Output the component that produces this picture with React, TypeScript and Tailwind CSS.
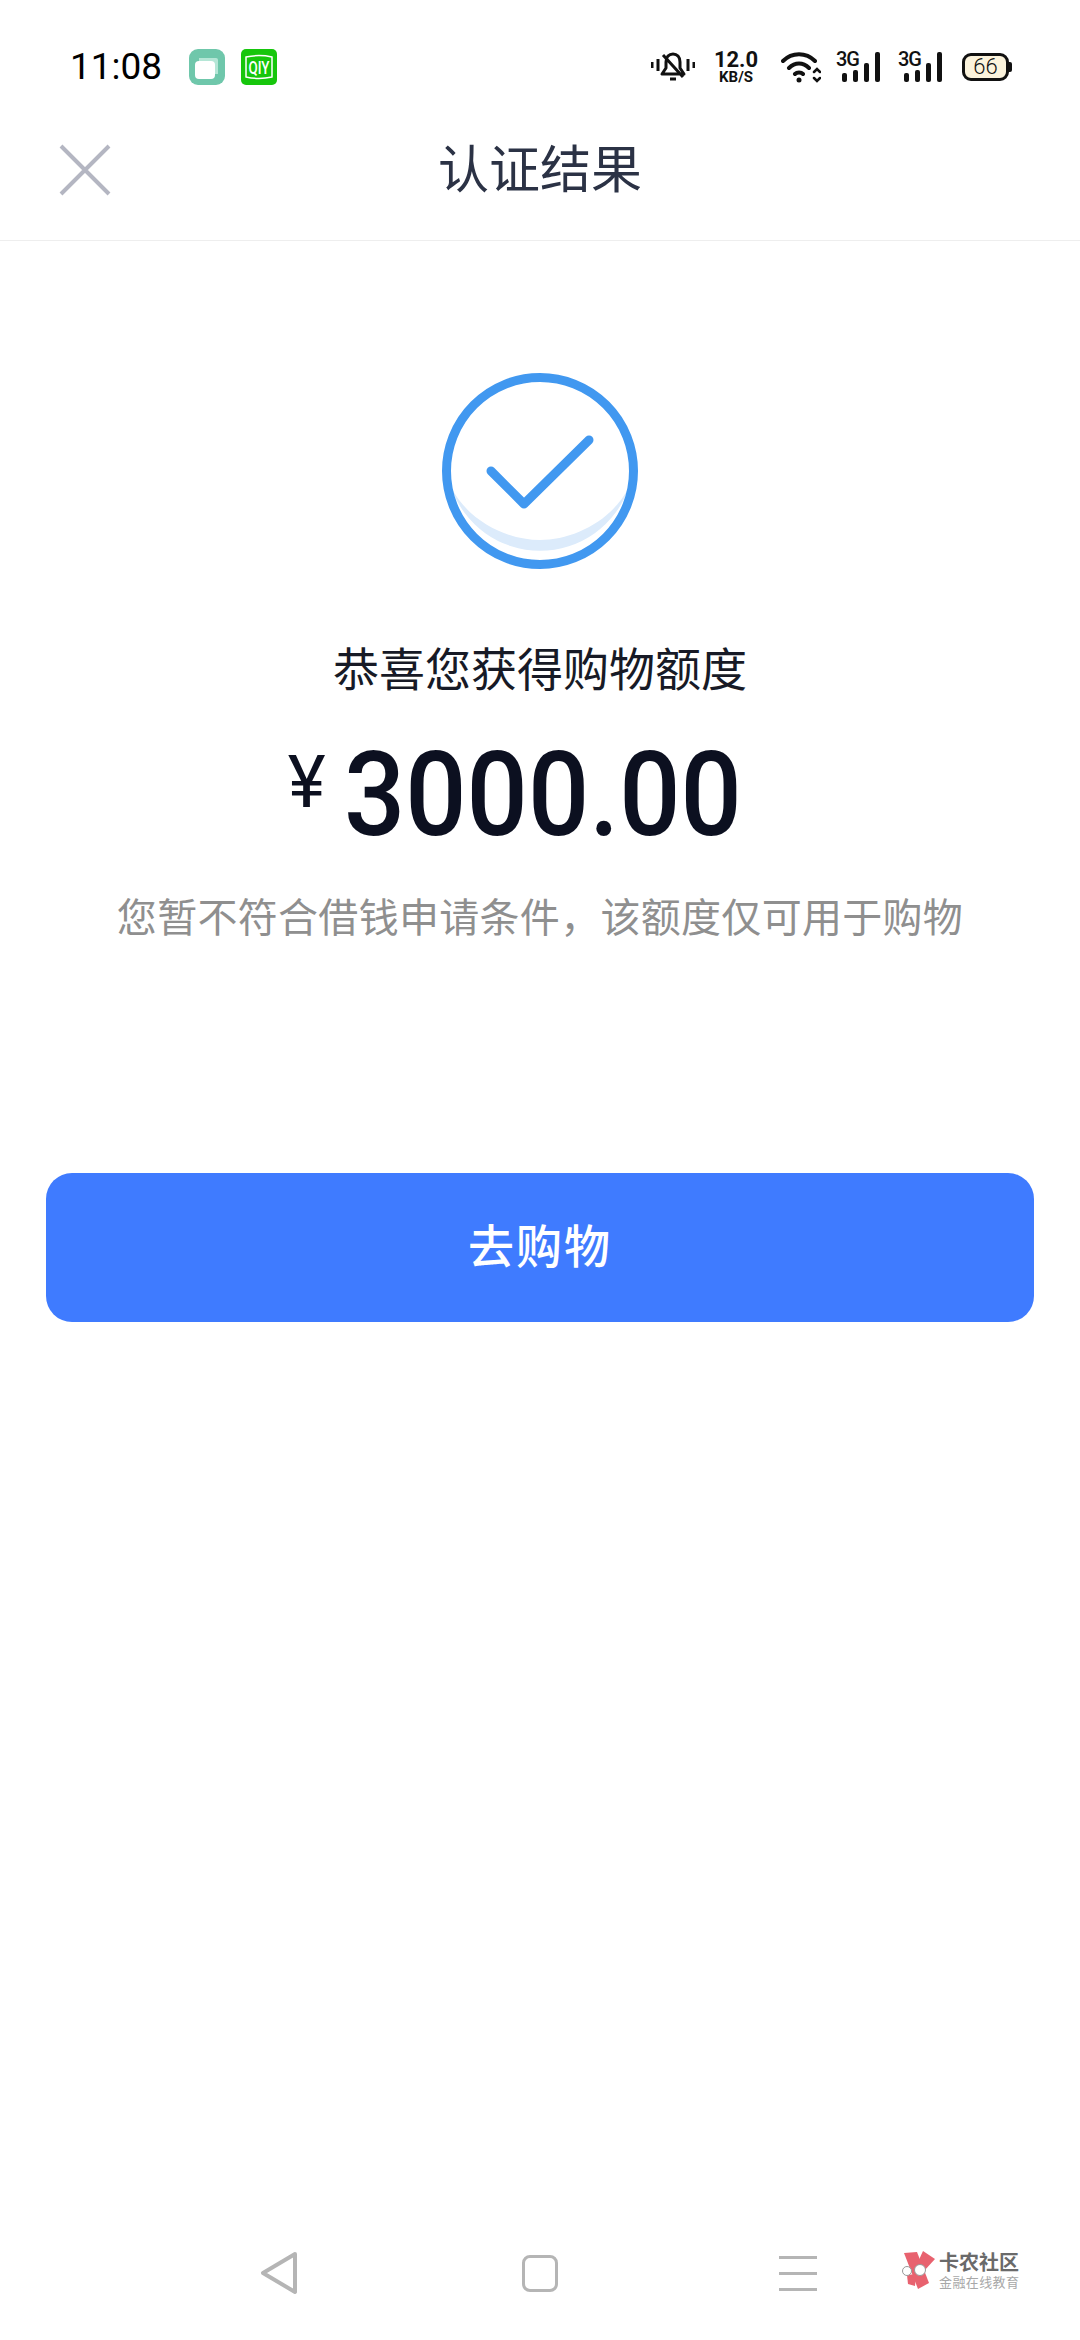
const cjk = "font-['Roboto','Noto_Sans_CJK_SC',sans-serif]";

function StatusBar() {
  return (
    <div className="flex h-[132px] items-center pt-[1px] pl-[70px] pr-[68px] text-black">
      <span className="w-[119px] font-['Roboto',sans-serif] text-[37px] leading-none">11:08</span>
      <svg width="36" height="36" viewBox="0 0 36 36">
        <rect width="36" height="36" rx="9" fill="#6fc7ab" />
        <path d="M10 9h17a2 2 0 0 1 2 2v14h-4V13H10z" fill="#b5e6d6" />
        <rect x="6" y="12" width="20" height="18" rx="4" fill="#fff" />
      </svg>
      <svg className="ml-[16px]" width="36" height="36" viewBox="0 0 36 36">
        <rect width="36" height="36" rx="5" fill="#16c60c" />
        <path d="M5 8c9-2 17-2 26 0v20c-9 2-17 2-26 0z" fill="none" stroke="#fff" strokeWidth="1.5" />
        <text x="18" y="24.5" textAnchor="middle" textLength="21" lengthAdjust="spacingAndGlyphs" fontFamily="Roboto, sans-serif" fontSize="18" fontWeight="500" fill="#fff">QIY</text>
      </svg>
      <div className="ml-auto flex items-center">
        <svg width="44" height="32" viewBox="0 0 44 32" fill="none" stroke="#111" strokeWidth="3">
          <path d="M1 11v6M7 8v12M37 8v12M43 11v6" />
          <path d="M11 23h22l-4-6v-6c0-5-3-8-7-8s-7 3-7 8v6zM19 28h6M12 4l20 22" strokeLinejoin="round" />
        </svg>
        <div className="ml-[16px] flex w-[50px] flex-col items-center font-['Roboto',sans-serif] font-bold text-[#111]">
          <span className="text-[22px] leading-[21px]">12.0</span>
          <span className="text-[15px] leading-[14px]">KB/S</span>
        </div>
        <svg className="ml-[20px]" width="40" height="32" viewBox="0 0 40 32" fill="none" stroke="#111" strokeWidth="4" strokeLinecap="round">
          <path d="M2 10c9-9 23-9 32 0M8 17c6-6 14-6 20 0M14 23c2-2 6-2 8 0" />
          <circle cx="18" cy="29" r="2.5" fill="#111" stroke="none" />
          <path d="M33 21l3-3 3 3M33 27l3 3 3-3" strokeWidth="2.5" />
        </svg>
        <Signal className="ml-[15px]" />
        <Signal className="ml-[18px]" />
        <div className="ml-[20px] flex items-center">
          <div className="flex h-[28px] w-[47px] items-center justify-center rounded-[9px] border-[3px] border-[#111] bg-[#fbf3dc] font-['Roboto',sans-serif] text-[22px] font-light leading-none text-[#111]">
            66
          </div>
          <div className="h-[10px] w-[3px] rounded-r-[2px] bg-[#111]" />
        </div>
      </div>
    </div>
  );
}

function Signal({ className }: { className: string }) {
  return (
    <div className={`relative h-[32px] w-[44px] ${className}`}>
      <span className="absolute left-0 top-[-3px] font-['Roboto',sans-serif] text-[20px] font-medium leading-[22px] tracking-[-1px] text-[#111]">3G</span>
      <svg width="44" height="32" viewBox="0 0 44 32" fill="#111">
        <rect x="6" y="22" width="5" height="9" rx="2" />
        <rect x="17" y="19" width="5" height="12" rx="2" />
        <rect x="28" y="12" width="5" height="19" rx="2" />
        <rect x="39" y="1" width="5" height="30" rx="2" />
      </svg>
    </div>
  );
}

function SuccessIcon() {
  return (
    <svg width="196" height="196" viewBox="0 0 196 196" fill="none">
      <path d="M9 114A94 94 0 0 0 187 114C170 148 131 167 98 167S26 148 9 114Z" fill="#dcebfb" />
      <circle cx="98" cy="98" r="93.5" stroke="#4198f0" strokeWidth="9" />
      <path d="M49 98L82 131L147 67" stroke="#4198f0" strokeWidth="9" strokeLinecap="round" strokeLinejoin="round" />
    </svg>
  );
}

function NavBar() {
  return (
    <div className="relative mt-auto flex h-[88px] items-center pb-[46px] pl-[259px]">
      <svg width="40" height="44" viewBox="0 0 40 44" fill="none" stroke="#b5b5b5" strokeWidth="4" strokeLinejoin="round">
        <path d="M36 3L4 22L36 41Z" />
      </svg>
      <div className="ml-[223px] h-[37px] w-[36px] rounded-[8px] border-[3px] border-[#b5b5b5]" />
      <div className="ml-[221px] flex w-[38px] flex-col gap-[13px]">
        <div className="h-[3px] bg-[#b5b5b5]" />
        <div className="h-[3px] bg-[#b5b5b5]" />
        <div className="h-[3px] bg-[#b5b5b5]" />
      </div>
      <div className="absolute left-[900px] top-[-1px] flex items-center">
        <svg width="38" height="40" viewBox="0 0 38 40">
          <path d="M4 2L17 1L29 32L18 38Z" fill="#e8626f" />
          <path d="M23 0L35 8L24 20L17 13Z" fill="#e8626f" />
          <path d="M7 24L16 23L15 35L8 33Z" fill="#e8626f" />
          <circle cx="7" cy="20" r="4.5" fill="#fff" stroke="#999" strokeWidth="1" />
          <circle cx="20" cy="19" r="5.5" fill="#fff" stroke="#999" strokeWidth="1" />
        </svg>
        <div className="ml-[1px] flex flex-col">
          <span className={`${cjk} text-[20px] font-bold leading-[24px] text-[#6a6a6a]`}>卡农社区</span>
          <span className={`${cjk} text-[13px] leading-[16px] tracking-[0.4px] text-[#a8a8a8]`}>金融在线教育</span>
        </div>
      </div>
    </div>
  );
}

export default function App() {
  return (
    <div className={`flex h-[2340px] w-[1080px] flex-col bg-white ${cjk}`}>
      <StatusBar />

      <div className="relative flex h-[109px] items-center justify-center border-b border-[#eeeeee] pb-[32px]">
        <svg className="absolute left-[59px] top-[12px]" width="52" height="52" viewBox="0 0 52 52" stroke="#b4b6c2" strokeWidth="4">
          <path d="M2 2L50 50M50 2L2 50" />
        </svg>
        <h1 className="text-[51px] font-normal leading-none text-[#2b3245]">认证结果</h1>
      </div>

      <div className="flex flex-col items-center pt-[132px]">
        <SuccessIcon />
        <p className="mt-[71px] text-[46px] leading-[60px] text-[#171a26]">恭喜您获得购物额度</p>
        <div className="mt-[35px] mr-[36px] flex h-[120px] items-center text-[#0c1020]">
          <span className="mb-[24px] font-['Roboto',sans-serif] text-[72px] font-normal leading-none">¥</span>
          <span className="ml-[3px] origin-center scale-x-[0.93] font-['Roboto',sans-serif] text-[116px] font-medium leading-none">3000.00</span>
        </div>
        <p className="mt-[39px] text-[40px] leading-[50px] tracking-[0.3px] text-[#8f8f8f]">您暂不符合借钱申请条件，该额度仅可用于购物</p>
      </div>

      <button
        type="button"
        className="mx-[46px] mt-[229px] h-[149px] rounded-[26px] bg-[#3f7bff] text-[46px] font-medium tracking-[2px] text-white"
      >
        去购物
      </button>

      <NavBar />
    </div>
  );
}
